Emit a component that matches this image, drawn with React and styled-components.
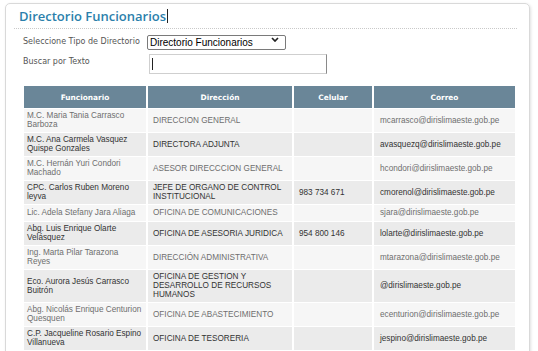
import React from 'react';
import styled, { createGlobalStyle } from 'styled-components';

const GlobalStyle = createGlobalStyle`
    html, body {
        margin:0;
        padding:0;
        background:#fff;
    }
`;

const Page = styled.div`
    padding:3px 0 0 5px;
`;

const Card = styled.div`
    box-sizing:border-box;
    width:525px;
    border:1px solid #d9d9d9;
    border-radius:5px;
    box-shadow:1px 1px 3px rgba(0,0,0,.12);
    padding:0 12px 20px 8px;
`;

const TitleBar = styled.div`
    display:flex;
    align-items:center;
    height:24px;
    padding:0 0 0 5px;
    border-bottom:1px dotted #c9c9c9;
`;

const Title = styled.h1`
    margin:0;
    font-family:"Open Sans", sans-serif;
    font-size:13px;
    font-weight:600;
    color:#2b7fab;
    line-height:16px;
`;

const Caret = styled.span`
    display:inline-block;
    width:1px;
    height:${({h}) => h}px;
    background:#222;
    margin-left:${({gap}) => gap}px;
`;

const Form = styled.div`
    display:grid;
    grid-template-columns:124px auto;
    row-gap:4px;
    align-items:center;
    padding:3px 0 0 9px;
`;

const Label = styled.label`
    font-family:"DejaVu Sans", sans-serif;
    font-size:8px;
    color:#555;
    align-self:${({top}) => top ? 'start' : 'center'};
    padding-top:${({top}) => top ? '3px' : '0'};
`;

const SelectWrap = styled.div`
    position:relative;
    width:139px;
`;

const Select = styled.select`
    appearance:none;
    box-sizing:border-box;
    width:139px;
    height:15px;
    border:1px solid #7a7a7a;
    border-radius:2px;
    padding:0 0 0 2px;
    font-family:"Liberation Sans", Arial, sans-serif;
    font-size:10px;
    color:#000;
    background:#fff;
    line-height:13px;
`;

const Chevron = styled.svg`
    position:absolute;
    right:7px;
    top:5px;
    pointer-events:none;
`;

const SearchBox = styled.div`
    box-sizing:border-box;
    width:178px;
    height:20px;
    margin-left:2px;
    display:flex;
    align-items:center;
    border:1px solid #cfcfcf;
    border-right-color:#8a8a8a;
    padding-left:1px;
`;

const Table = styled.table`
    table-layout:fixed;
    width:495px;
    margin:11px 0 0 8px;
    border-collapse:separate;
    border-spacing:2px 1px;
    font-family:"Liberation Sans", Arial, sans-serif;
    font-size:8.2px;
`;

const Th = styled.th`
    width:${({w}) => w}px;
    height:22px;
    padding:0;
    background:#6a8698;
    color:#fff;
    font-family:"DejaVu Sans", sans-serif;
    font-size:7.4px;
    font-weight:bold;
    text-align:center;
    vertical-align:middle;
`;

const Td = styled.td`
    padding:2px 3px 3px ${({pad}) => pad}px;
    line-height:9px;
    vertical-align:middle;
    background:${({dark}) => dark ? '#ebebeb' : '#f6f6f6'};
    color:${({dark}) => dark ? '#333' : '#6e6e6e'};
    height:${({one}) => one ? '11px' : '18px'};
`;

const rows = [
    ['M.C. Maria Tania Carrasco Barboza', 'DIRECCION GENERAL', '', 'mcarrasco@dirislimaeste.gob.pe'],
    ['M.C. Ana Carmela Vasquez Quispe Gonzales', 'DIRECTORA ADJUNTA', '', 'avasquezq@dirislimaeste.gob.pe'],
    ['M.C. Hernán Yuri Condori Machado', 'ASESOR DIRECCCION GENERAL', '', 'hcondori@dirislimaeste.gob.pe'],
    ['CPC. Carlos Ruben Moreno leyva', 'JEFE DE ORGANO DE CONTROL INSTITUCIONAL', '983 734 671', 'cmorenol@dirislimaeste.gob.pe'],
    ['Lic. Adela Stefany Jara Aliaga', 'OFICINA DE COMUNICACIONES', '', 'sjara@dirislimaeste.gob.pe'],
    ['Abg. Luis Enrique Olarte Velásquez', 'OFICINA DE ASESORIA JURIDICA', '954 800 146', 'lolarte@dirislimaeste.gob.pe'],
    ['Ing. Marta Pilar Tarazona Reyes', 'DIRECCIÓN ADMINISTRATIVA', '', 'mtarazona@dirislimaeste.gob.pe'],
    ['Eco. Aurora Jesús Carrasco Buitrón', 'OFICINA DE GESTION Y DESARROLLO DE RECURSOS HUMANOS', '', '@dirislimaeste.gob.pe'],
    ['Abg. Nicolás Enrique Centurion Quesquen', 'OFICINA DE ABASTECIMIENTO', '', 'ecenturion@dirislimaeste.gob.pe'],
    ['C.P. Jacqueline Rosario Espino Villanueva', 'OFICINA DE TESORERIA', '', 'jespino@dirislimaeste.gob.pe'],
];

const cols = [
    { name: 'Funcionario', w: 122, pad: 3 },
    { name: 'Dirección', w: 144, pad: 5 },
    { name: 'Celular', w: 78, pad: 5 },
    { name: 'Correo', w: 141, pad: 6 },
];

export default function App() {
    return (
        <Page>
            <GlobalStyle />
            <Card>
                <TitleBar>
                    <Title>Directorio Funcionarios</Title>
                    <Caret h={14} gap={1} />
                </TitleBar>
                <Form>
                    <Label>Seleccione Tipo de Directorio</Label>
                    <SelectWrap>
                        <Select defaultValue="f">
                            <option value="f">Directorio Funcionarios</option>
                        </Select>
                        <Chevron width="8" height="5" viewBox="0 0 8 5">
                            <path d="M1 1l3 3 3-3" fill="none" stroke="#222" strokeWidth="1.7" />
                        </Chevron>
                    </SelectWrap>
                    <Label top>Buscar por Texto</Label>
                    <SearchBox>
                        <Caret h={12} gap={1} />
                    </SearchBox>
                </Form>
                <Table>
                    <thead>
                        <tr>
                            {cols.map(c => <Th key={c.name} w={c.w}>{c.name}</Th>)}
                        </tr>
                    </thead>
                    <tbody>
                        {rows.map((r, i) => (
                            <tr key={i}>
                                {r.map((cell, j) => (
                                    <Td key={j} pad={cols[j].pad} dark={i % 2 === 1} one={i === 4}>{cell}</Td>
                                ))}
                            </tr>
                        ))}
                    </tbody>
                </Table>
            </Card>
        </Page>
    );
}
